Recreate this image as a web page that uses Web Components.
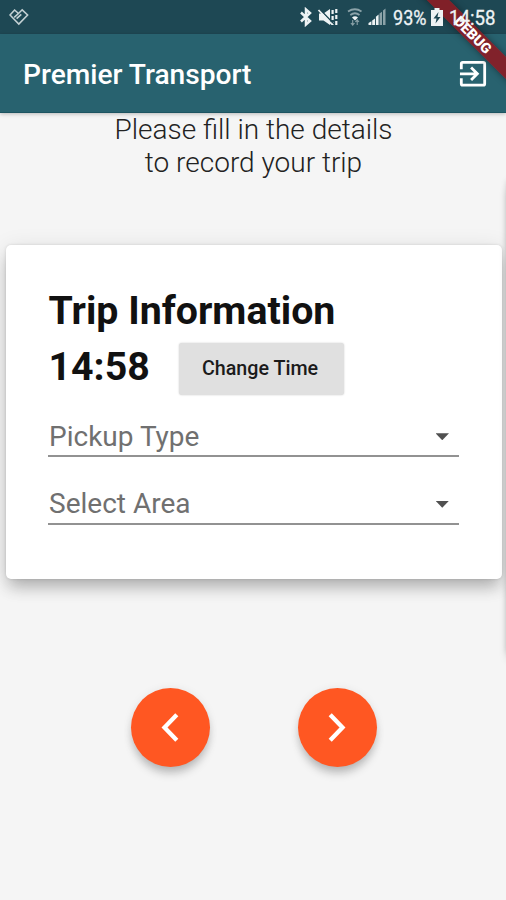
<!DOCTYPE html>
<html lang="en"><head><meta charset="utf-8"><title>Premier Transport</title>
<style>html,body{margin:0;height:900px;overflow:hidden;background:#f5f5f5;font-family:Roboto,"Liberation Sans",sans-serif}</style></head>
<body><trip-screen></trip-screen>
<script>
const define = (name, html) => {
  const t = document.createElement('template');
  t.innerHTML = html;
  customElements.define(name, class extends HTMLElement {
    constructor() { super(); this.attachShadow({mode: 'open'}).append(t.content.cloneNode(true)); }
  });
};

define('status-bar', `<style>
:host{display:flex;align-items:center;height:34px;box-sizing:border-box;padding:0 11px 0 9px;color:#eef3f4;position:relative;z-index:2}
svg{display:block;flex:none}
.sp{flex:1}
.t{font-size:20.500px;line-height:34px;white-space:nowrap;height:34px;flex:none;-webkit-text-stroke:.3px #eef3f4}
.t span{display:inline-block;transform-origin:0 50%;position:relative;top:1px}
.p{width:34px;margin-left:6px}.p span{transform:scaleX(.88)}
.c{width:46px;margin-left:6px}.c span{transform:scaleX(.91)}
</style>
<svg width="20" height="18" viewBox="0 0 20 18" fill="none" stroke="#c3d0d3" stroke-width="1.600"><path d="M1 7 5.600 2 9.500 5.500 13.200 1.800 18.600 7 9.800 16ZM5.200 9.300 9.500 5.500M7.600 10.700 12.300 6.300"/></svg>
<span class="sp"></span>
<svg width="88" height="20" viewBox="0 0 88 20">
 <path d="M2 5.500 11 14 7 17.500V2.500L11 6 2 14.500" fill="none" stroke="#eef3f4" stroke-width="2.500"/>
 <g fill="#eef3f4"><path d="M20 6.500h4.500L31 2v16l-6.500-4.500H20z"/><rect x="32.500" y="3" width="2.200" height="4"/><rect x="32.500" y="9" width="2.200" height="4"/><rect x="32.500" y="15" width="2.200" height="3"/><rect x="36.200" y="2" width="2.200" height="4"/><rect x="36.200" y="8" width="2.200" height="4"/><rect x="36.200" y="14" width="2.200" height="4"/></g>
 <path d="M21 2.500 35 17" stroke="#1e4854" stroke-width="1.400"/><path d="M19.500 3 33 17.500" stroke="#eef3f4" stroke-width="1.800"/>
 <g fill="none" stroke="#8ba2a8" stroke-width="1.800"><path d="M49 4.500Q56 0 62.500 4.500M51.300 8Q56 4.500 60.500 8"/></g><path d="M53 10.500Q56 8 59 10.500L56 13.500Z" fill="#eef3f4"/>
 <path d="M53.700 13v5M51.900 16l1.800 2.200L55.500 16M58.200 18v-5M56.400 15l1.800-2.200L60 15" fill="none" stroke="#8ba2a8" stroke-width="1.100"/>
 <g fill="#eef3f4"><path d="M69.500 18v-2l2.900-1.800V18zM73.200 18v-4.500l2.800-2v6.500zM76.900 18V9.700l2.700-2.200V18z"/></g><path d="M80.500 18V6.500l2.500-1.800V18zM84 18V3.500L86.500 1.500V18z" fill="#8ba2a8"/>
</svg>
<div class="t p"><span>93%</span></div>
<svg width="12" height="18" viewBox="0 0 12 18" style="margin-left:4px"><path d="M3.500 0h5v2H12v16H0V2h3.500z" fill="#eef3f4"/><path d="M7.500 4 2.500 10.500H5.500L4.500 15.500 9.500 9H6.500z" fill="#1e4854"/></svg>
<div class="t c"><span>14:58</span></div>`);

define('app-bar', `<style>
:host{display:flex;align-items:center;justify-content:space-between;box-sizing:border-box;height:79px;padding:0 19.500px 0 23px;background:#28626f;border-bottom:1px solid #1d5461;color:#fff;box-shadow:0 1px 4px rgba(0,0,0,.25);position:relative}
span{font-size:28.150px;font-weight:500;line-height:34px;padding-top:3px}
svg{display:block;margin-top:1px}
</style><span><slot></slot></span>
<svg width="28" height="28" viewBox="0 0 29 28" fill="none" stroke="#fff" stroke-width="2.900"><path d="M2.400 9V3.400q0-1.500 1.500-1.500h21.200q1.500 0 1.500 1.500v20.700q0 1.500-1.500 1.500H3.900q-1.500 0-1.500-1.500V18.500M1 13.800H18.500M12.500 7.300 19 13.800 12.500 20.300"/></svg>`);

define('debug-banner', `<style>
:host{position:absolute;right:0;top:0;width:90px;height:90px;overflow:hidden;pointer-events:none}
div{position:absolute;left:-13px;top:26.500px;width:140px;height:16px;background:rgba(139,28,36,.9);transform:rotate(45deg);box-shadow:0 0 7px rgba(0,0,0,.4);color:#fff;font-size:14.300px;font-weight:900;line-height:16.500px;text-align:center}
</style><div>DEBUG</div>`);

define('trip-intro', `<style>
:host{display:block;height:132px;box-sizing:border-box;padding:1px 0 0 1px;text-align:center;font-size:28px;font-weight:300;line-height:32.500px;color:#222}
.a,.b{display:block;white-space:nowrap}
</style><span class="a">Please fill in the details</span><span class="b">to record your trip</span>`);

define('trip-card', `<style>
:host{display:block;box-sizing:border-box;margin:0 4.500px 0 6px;height:333.500px;padding:43px 42.500px 0 42px;border-radius:5px;background:#fff;box-shadow:0 11px 16px -3px rgba(0,0,0,.24),0 3px 22px rgba(0,0,0,.1),0 0 3px rgba(0,0,0,.12)}
h1{margin:0;font-size:39.300px;font-weight:700;line-height:46px;color:#111;white-space:nowrap;padding-left:.500px}
.row{display:flex;align-items:center;height:53px;margin-top:8px}
.row h1{width:130px;line-height:51px;height:53px}
</style><h1>Trip Information</h1><div class="row"><h1>14:58</h1><flat-button>Change Time</flat-button></div>
<select-field style="margin-top:18.500px">Pickup Type</select-field><select-field style="margin-top:24px">Select Area</select-field>`);

define('flat-button', `<style>
:host{display:flex;align-items:center;justify-content:center;box-sizing:border-box;width:165px;height:52px;padding-right:2px;background:#e0e0e0;border-radius:3px;font-size:19.700px;font-weight:500;color:#1b1b1b;white-space:nowrap;box-shadow:0 0 2px rgba(0,0,0,.2)}
</style><span><slot></slot></span>`);

define('select-field', `<style>
:host{display:flex;box-sizing:border-box;height:43.500px;align-items:center;justify-content:space-between;padding:5px 10px 0 1px;border-bottom:2px solid #929292;font-size:28px;color:#707070}
span{line-height:34px;white-space:nowrap}
i{width:13.500px;height:7px;background:#505050;clip-path:polygon(0 0,100% 0,50% 100%)}
</style><span><slot></slot></span><i></i>`);

define('round-button', `<style>
:host{display:flex;align-items:center;justify-content:center;width:79px;height:79px;border-radius:50%;background:#ff5722;box-shadow:0 8px 10px -2px rgba(0,0,0,.23),0 1px 10px rgba(0,0,0,.08)}
:host([next]) svg{transform:scaleX(-1)}
svg{display:block}
</style><svg width="18" height="29" viewBox="0 0 18 29" fill="none" stroke="#fff" stroke-width="4.300"><path d="M15.800 1.700 3.500 14.500 15.800 27.300"/></svg>`);

define('trip-screen', `<style>
:host{display:flex;flex-direction:column;position:relative;width:506px;height:900px;overflow:hidden;background:linear-gradient(#1e4854 34px,#f5f5f5 34px)}
status-bar,app-bar,trip-intro,trip-card,nav{flex:none}
nav{display:flex;justify-content:center;gap:88px;margin-top:109.500px;padding-left:1.500px}
.peek{position:absolute;left:507px;top:180px;width:40px;height:472px;box-shadow:0 8px 9px -2px rgba(0,0,0,.28),0 0 6px rgba(0,0,0,.16)}
</style><status-bar></status-bar><app-bar>Premier Transport</app-bar><trip-intro></trip-intro><trip-card></trip-card><nav><round-button></round-button><round-button next></round-button></nav><div class="peek"></div><debug-banner></debug-banner>`);
</script></body></html>
